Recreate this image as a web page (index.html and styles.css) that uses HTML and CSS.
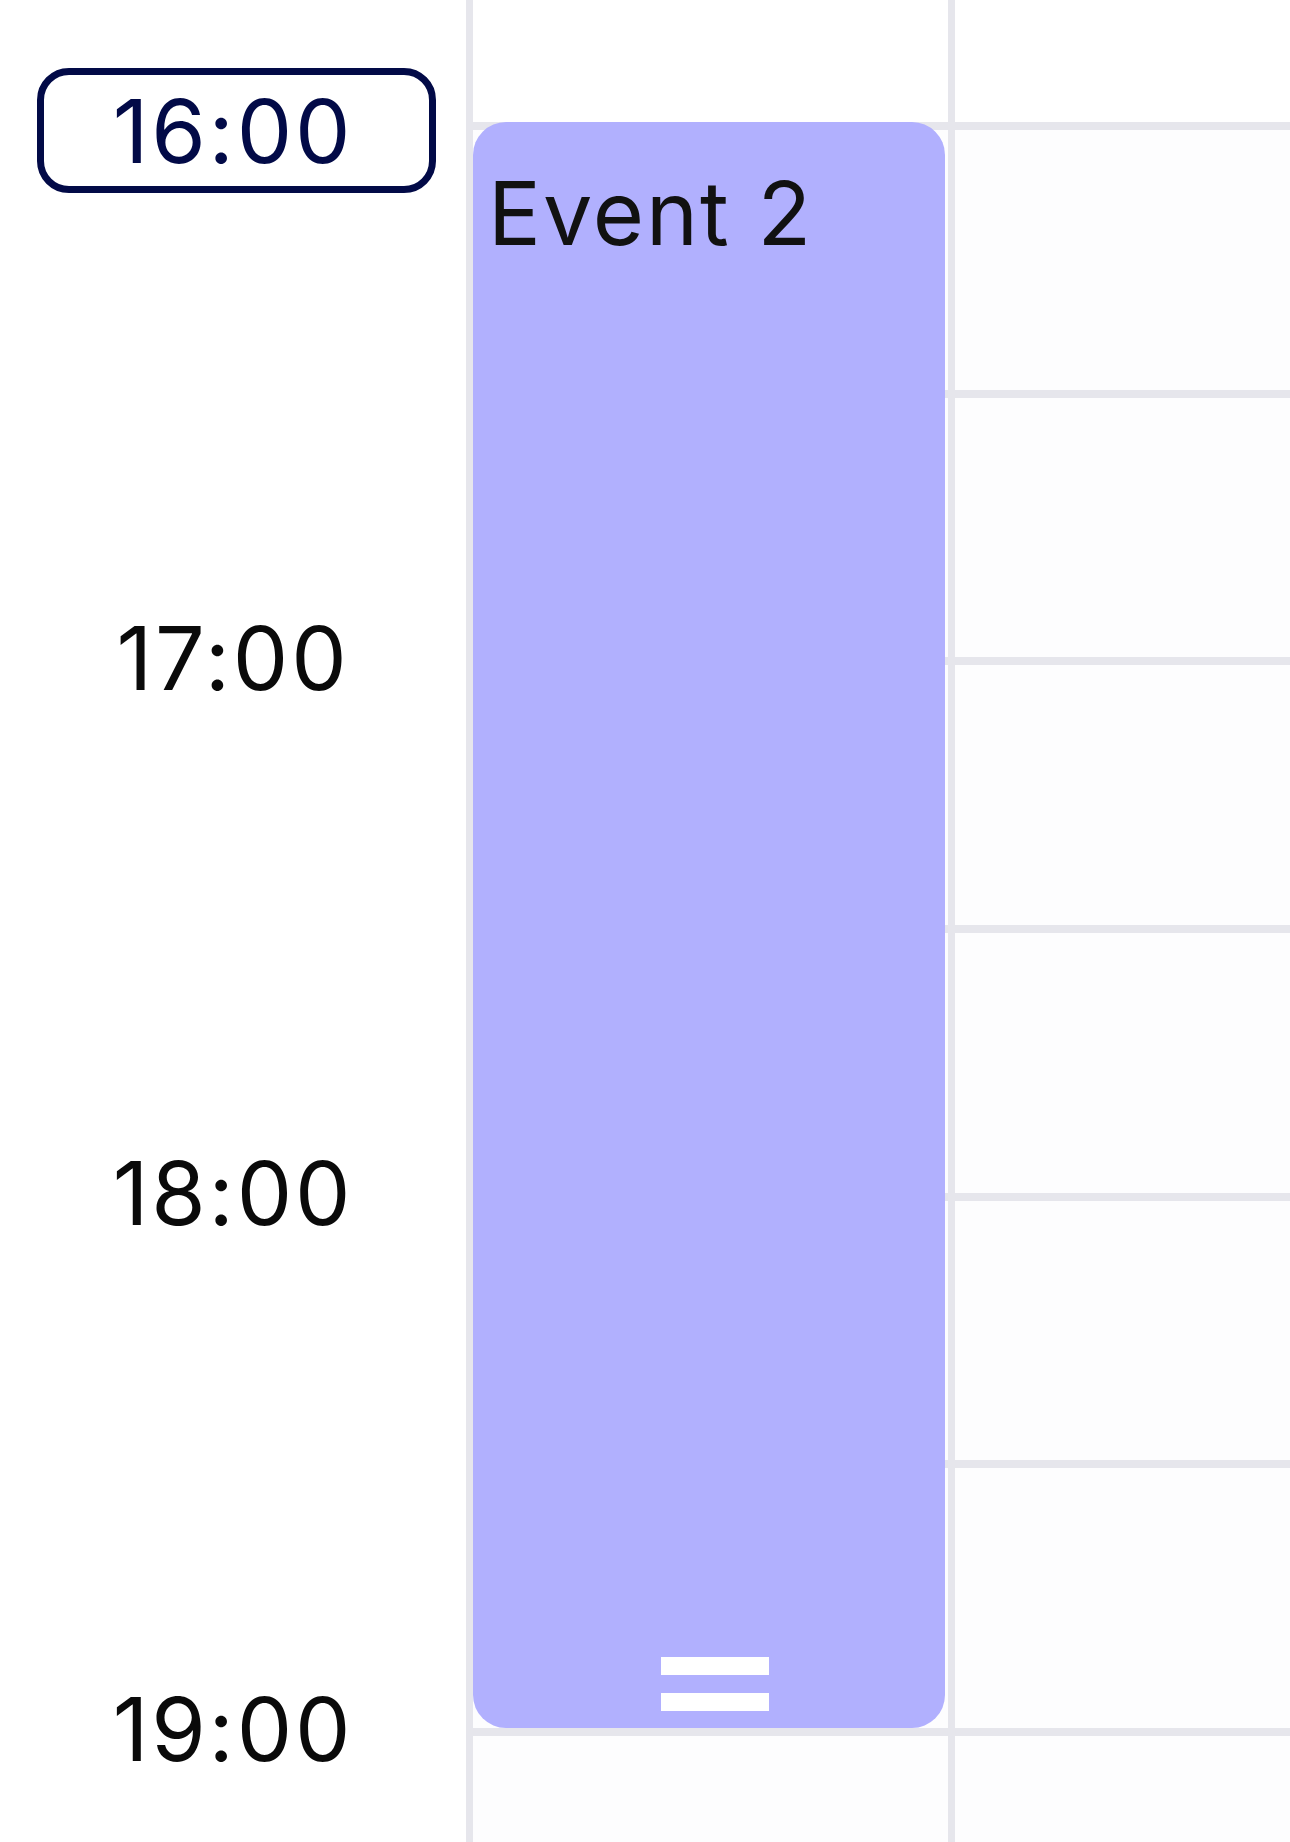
FILE: index.html
```html
<!DOCTYPE html>
<html lang="en">
<head>
<meta charset="utf-8">
<title>Day view</title>
<link rel="stylesheet" href="styles.css">
</head>
<body>
<div class="calendar">
  <div class="times">
    <div class="pill">16:00</div>
    <div class="hour">17:00</div>
    <div class="hour">18:00</div>
    <div class="hour">19:00</div>
  </div>
  <div class="vline"></div>
  <div class="day">
    <div class="slot"></div>
    <div class="slot"></div>
    <div class="slot"></div>
    <div class="slot"></div>
    <div class="slot"></div>
    <div class="slot"></div>
    <div class="slot"></div>
    <div class="event">
      <div class="event-title">Event 2</div>
      <div class="handle"><span class="bar"></span><span class="bar"></span></div>
    </div>
  </div>
  <div class="vline"></div>
  <div class="day rest">
    <div class="slot"></div>
    <div class="slot"></div>
    <div class="slot"></div>
    <div class="slot"></div>
    <div class="slot"></div>
    <div class="slot"></div>
    <div class="slot"></div>
  </div>
</div>
</body>
</html>
```

FILE: styles.css
```css
html, body {
  margin: 0;
  padding: 0;
  background: #ffffff;
}

body {
  font-family: Inter, "Noto Sans", "Liberation Sans", sans-serif;
  color: #111111;
}

.calendar {
  display: flex;
  height: 1842px;
  overflow: hidden;
}

.times {
  width: 466px;
  flex: none;
  display: flex;
  flex-direction: column;
  align-items: center;
  padding-top: 68px;
  box-sizing: border-box;
  font-size: 88px;
  line-height: 88px;
  letter-spacing: 2.8px;
}

.pill {
  box-sizing: border-box;
  width: 399px;
  height: 125px;
  margin-left: 6px;
  padding-right: 6px;
  border: 7px solid #020a47;
  border-radius: 32px;
  color: #020a47;
  display: flex;
  align-items: center;
  justify-content: center;
  margin-bottom: 421px;
  flex: none;
}

.hour {
  height: 535.33px;
  flex: none;
  color: #0a0a0a;
}

.vline {
  width: 7px;
  flex: none;
  background: #e6e6ec;
}

.day {
  width: 475px;
  flex: none;
  position: relative;
  padding-top: 122px;
  box-sizing: border-box;
  background: #ffffff;
}

.day.rest {
  flex: 1;
  width: auto;
}

.slot {
  box-sizing: border-box;
  height: 267.67px;
  border-top: 8px solid #e6e6ec;
  background: #fdfdfe;
}

.event {
  position: absolute;
  top: 122px;
  left: 0;
  width: 472px;
  height: 1606px;
  box-sizing: border-box;
  border-radius: 33px;
  background: #b1b0fe;
  padding: 47px 15px 17px;
  display: flex;
  flex-direction: column;
}

.event-title {
  font-size: 88px;
  line-height: 88px;
  letter-spacing: 2px;
  color: #111111;
}

.handle {
  margin-top: auto;
  align-self: center;
  margin-left: 12px;
  display: flex;
  flex-direction: column;
  gap: 18px;
}

.bar {
  display: block;
  width: 108px;
  height: 18px;
  background: #ffffff;
}
```
